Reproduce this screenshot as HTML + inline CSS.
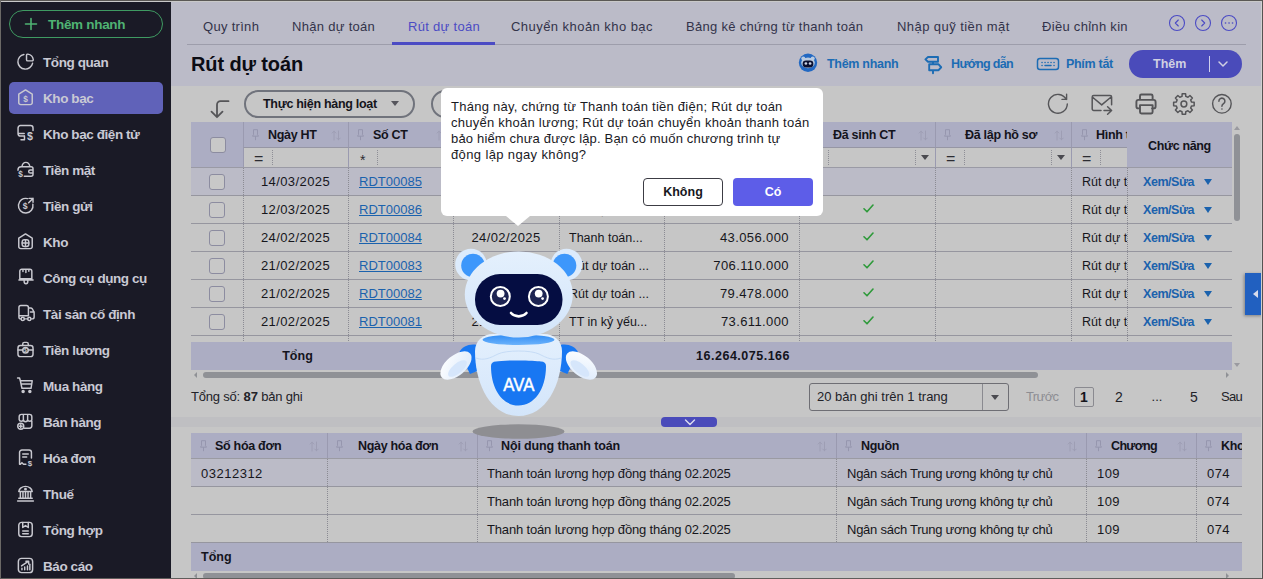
<!DOCTYPE html>
<html lang="vi">
<head>
<meta charset="utf-8">
<title>Rút dự toán</title>
<style>
*{box-sizing:border-box;margin:0;padding:0}
html,body{width:1263px;height:579px;overflow:hidden;background:#c6c6c6}
body{font-family:"Liberation Sans",sans-serif;font-size:13px;color:#111;position:relative}
.abs{position:absolute}
#app{position:absolute;left:0;top:0;width:1263px;height:579px;overflow:hidden;background:#c6c6c6}
/* ---------- sidebar ---------- */
#side{position:absolute;left:0;top:0;width:171px;height:579px;background:#1a1a26}
#quick{position:absolute;left:9px;top:10px;width:154px;height:28px;border:1px solid #3f9a62;border-radius:14px;color:#4fb273;font-weight:700;font-size:13.5px;line-height:28px}
#quick span{position:absolute;left:38px;top:0;letter-spacing:-.3px;white-space:nowrap}
#quick svg{position:absolute;left:14px;top:6px}
.mi{position:absolute;left:9px;width:154px;height:32px;border-radius:5px;color:#c9c9d4;font-weight:700;font-size:13.5px;line-height:34px;white-space:nowrap}
.mi.on{background:#6062b9}
.mi svg{position:absolute;left:7px;top:6px;width:19px;height:19px;fill:none;stroke:#c9c9d0;stroke-width:1.85;stroke-linecap:round;stroke-linejoin:round}
.mi span{position:absolute;left:34px;top:0;letter-spacing:-.42px}
/* ---------- header ---------- */
#head{position:absolute;left:171px;top:0;width:1092px;height:86px;background:#bbbbc8}
.tab{position:absolute;top:16px;height:21px;line-height:21px;font-size:13px;color:#33334a;white-space:nowrap;letter-spacing:.3px}
.tab.on{color:#4b4bc4}
#tabline{position:absolute;left:187px;top:44px;width:1059px;height:1px;background:#9d9dab}
#tabon{position:absolute;left:392px;top:42px;width:103px;height:3px;background:#4b4bc4}
#title{position:absolute;left:191px;top:50px;height:28px;line-height:28px;font-size:20px;font-weight:700;color:#0c0c14;letter-spacing:-.12px;white-space:nowrap}
.hl{position:absolute;top:54px;height:20px;line-height:20px;font-size:12.5px;font-weight:700;color:#1c6cb4;white-space:nowrap;letter-spacing:-.3px}
#add{position:absolute;left:1129px;top:50px;width:113px;height:28px;border-radius:14px;background:#4a4bba;color:#d0d0e2;font-weight:700;font-size:12.5px;line-height:28px}
#add span{position:absolute;left:24px;top:0}
#add i{position:absolute;left:80px;top:6px;width:1px;height:16px;background:#d0d0ee}

/* ---------- toolbar ---------- */
.pill{position:absolute;top:90px;height:28px;border:2px solid #70737c;border-radius:14px;font-weight:700;font-size:12.5px;line-height:24px;color:#15151c;white-space:nowrap;letter-spacing:-.3px}
.tic{position:absolute;fill:none;stroke:#4c4c50;stroke-width:1.4;stroke-linecap:round;stroke-linejoin:round}
/* ---------- grid ---------- */
.g{position:absolute;overflow:hidden}
.hc{position:absolute;top:0;height:25px;background:#acadc3;border-left:1px solid #9a9ab0;font-weight:700;font-size:12.5px;line-height:27px;color:#14141c;white-space:nowrap;letter-spacing:-.3px;overflow:hidden}
.hc b{position:absolute;top:0;font-weight:700}
.hc>*,.fc>*{margin-left:-1px}
.pin{position:absolute;top:7px;width:7px;height:12px;fill:none;stroke:#9696ae;stroke-width:1}
.srt{position:absolute;top:8px;width:10px;height:11px;fill:none;stroke:#9e9eb4;stroke-width:1;stroke-linecap:round;stroke-linejoin:round}
.fc{position:absolute;top:25px;height:21px;background:#c6c6c6;border-left:1px solid #9a9ab0;border-top:1px solid #9696a4;border-bottom:1px solid #9b9ba3;font-size:16px;line-height:22px;color:#2c2c32}
.fc u{position:absolute;top:2px;width:0;height:15px;border-left:1px dotted #8e8e96;text-decoration:none}
.fc s{position:absolute;top:7px;width:0;height:0;border:4px solid transparent;border-top:5px solid #4a4a50;border-bottom:0;text-decoration:none}
.fc em{position:absolute;top:0;font-style:normal}
.row{position:absolute;left:0;height:28px;border-bottom:1px solid #96969f;font-size:13px;line-height:28px;color:#16161c;white-space:nowrap}
.row.sel{background:#bbbbc7}
.row>span{position:absolute;top:0;height:27px}
.row a{color:#1b62ad;text-decoration:underline}
.vl{position:absolute;width:0;border-left:1px dotted #8b8b93}
.cb{position:absolute;width:16px;height:16px;border:1px solid #8c8ca0;border-radius:3px;background:#c8c8c8}
.num{letter-spacing:.4px}
.act{color:#1b62ad;font-weight:700;font-size:12.5px;letter-spacing:-.45px}
.car{position:absolute;width:0;height:0;border:4.5px solid transparent;border-top:6px solid #1b62ad;border-bottom:0}
.chk{position:absolute;width:11px;height:9px;fill:none;stroke:#2e9a3a;stroke-width:1.6;stroke-linecap:round;stroke-linejoin:round}
.ft{position:absolute;background:#acadc3;font-weight:700;font-size:12.5px;color:#14141c;white-space:nowrap}
.sb{position:absolute;height:6px;border-radius:3px;background:#8f9196}
.arr{position:absolute;width:0;height:0;border:4px solid transparent}

/* ---------- dialog ---------- */
#dlg{position:absolute;left:441px;top:88px;width:382px;height:128px;background:#fff;border-radius:6px}
#dlg p{position:absolute;left:10px;top:11px;width:366px;font-size:13px;line-height:16px;color:#1a1a1f;letter-spacing:.25px;white-space:nowrap}
#dlg .tip{position:absolute;left:65px;top:128px;width:0;height:0;border:12px solid transparent;border-top:10px solid #fff;border-bottom:0}
.btn{position:absolute;top:90px;width:80px;height:28px;border-radius:4px;font-weight:700;font-size:12.5px;line-height:26px;text-align:center}
#no{left:202px;border:1px solid #3c3c44;color:#17171d;background:#fff}
#yes{left:292px;background:#5d5de8;color:#fff;line-height:28px}
</style>
</head>
<body>
<div id="app">

<!-- SIDEBAR -->
<div id="side">
  <div id="quick"><svg width="14" height="14" viewBox="0 0 14 14"><path d="M7 1.5v11M1.5 7h11" stroke="#4fb273" stroke-width="1.6" fill="none" stroke-linecap="round"/></svg><span>Thêm nhanh</span></div>
  <div class="mi" style="top:46px"><svg viewBox="0 0 24 24"><path d="M10 3.100A9.350 9.350 0 1 0 20.900 14.300"/><path d="M13.300 4.200a1.500 1.500 0 0 1 1.700-1.500 8 8 0 0 1 6.800 6.800 1.500 1.500 0 0 1-1.500 1.700h-5.500a1.500 1.500 0 0 1-1.500-1.500z"/></svg><span>Tổng quan</span></div>
  <div class="mi on" style="top:82px"><svg viewBox="0 0 24 24"><path d="M12 2.500l8.500 5.300v10.700a2.500 2.500 0 0 1-2.500 2.500H6a2.500 2.500 0 0 1-2.500-2.500V7.800z"/><text x="12" y="17.300" text-anchor="middle" font-size="10.500" font-weight="700" font-family="Liberation Sans,sans-serif" fill="#c9c9d0" stroke="none">$</text></svg><span>Kho bạc</span></div>
  <div class="mi" style="top:118px"><svg viewBox="0 0 24 24"><path d="M21.500 8.200V5a3 3 0 0 0-3-3H5.600a3 3 0 0 0-3 3v7.200a3 3 0 0 0 3 3h5M2.600 11.900h7.800M10.700 15.200v4.800H6.300"/><text x="17.700" y="20.300" text-anchor="middle" font-size="13.500" font-weight="700" font-family="Liberation Sans,sans-serif" fill="#c9c9d0" stroke="none">$</text></svg><span>Kho bạc điện tử</span></div>
  <div class="mi" style="top:154px"><svg viewBox="0 0 24 24"><path d="M7.500 8.300C8 5 10 3 12.500 3s4.500 2 5 5.300M10.500 20.500h8.500a2.500 2.500 0 0 0 2.500-2.500v-7a2.500 2.500 0 0 0-2.500-2.500H6.500a4 4 0 0 0-4 4v.5M21.500 12.500h-3.500a2 2 0 0 0 0 4h3.500"/><text x="5.800" y="21.800" text-anchor="middle" font-size="10.500" font-weight="700" font-family="Liberation Sans,sans-serif" fill="#c9c9d0" stroke="none">$</text></svg><span>Tiền mặt</span></div>
  <div class="mi" style="top:190px"><svg viewBox="0 0 24 24"><path d="M14.500 3.300a9.200 9.200 0 1 0 6.800 7.200M16.500 3h5v5M21.500 3l-5.500 5.500"/><text x="11.500" y="17" text-anchor="middle" font-size="11" font-weight="700" font-family="Liberation Sans,sans-serif" fill="#c9c9d0" stroke="none">$</text></svg><span>Tiền gửi</span></div>
  <div class="mi" style="top:226px"><svg viewBox="0 0 24 24"><path d="M12 2.500l8.500 5.300v10.700a2.500 2.500 0 0 1-2.500 2.500H6a2.500 2.500 0 0 1-2.500-2.500V7.800z"/><rect x="7.800" y="9.800" width="8.400" height="8.400" rx="2.800"/><path d="M12 9.800v8.400M7.800 14h8.400"/></svg><span>Kho</span></div>
  <div class="mi" style="top:262px"><svg viewBox="0 0 24 24"><path d="M4.800 13.500V4a2.500 2.500 0 0 1 2.500-2.500h10.200a2.500 2.500 0 0 1 2.500 2.500v9.500zM3.700 15.200h17.900M10.300 15.200v2.300a2.300 2.300 0 0 0 4.600 0v-2.300M8.800 1.500v3M12.500 1.500v4.200M16.200 1.500v2.500"/></svg><span>Công cụ dụng cụ</span></div>
  <div class="mi" style="top:298px"><svg viewBox="0 0 24 24"><path d="M15.700 14.900H3.700V4.300a2.500 2.500 0 0 1 2.500-2.500h7a2.500 2.500 0 0 1 2.500 2.500zM15.700 5.100h2.800a2.500 2.500 0 0 1 2.100 1.200l1.900 3.200a2.500 2.500 0 0 1 .4 1.300v5.500a2.500 2.500 0 0 1-2.500 2.500h-.9M3.700 14.900v1.400a2.500 2.500 0 0 0 2.500 2.500h.300M10.500 18.800h4.300M18.300 10h4"/><circle cx="8.500" cy="18.800" r="2"/><circle cx="16.800" cy="18.800" r="2"/></svg><span>Tài sản cố định</span></div>
  <div class="mi" style="top:334px"><svg viewBox="0 0 24 24"><rect x="2.500" y="7" width="19" height="14" rx="3"/><path d="M8.500 7V5a2 2 0 0 1 2-2h3a2 2 0 0 1 2 2v2M2.500 12.500h6M15.500 12.500h6"/><circle cx="12" cy="13" r="3.500"/><text x="12" y="15.300" text-anchor="middle" font-size="6.500" font-weight="700" font-family="Liberation Sans,sans-serif" fill="#c9c9d0" stroke="none">$</text></svg><span>Tiền lương</span></div>
  <div class="mi" style="top:370px"><svg viewBox="0 0 24 24"><path d="M2 2.500h2.500l1 3.500M5.500 6h15l-1.500 9.500h-11.500zM6.500 10h13"/><circle cx="9" cy="19.500" r="1.300" fill="#c9c9d0"/><circle cx="17.500" cy="19.500" r="1.300" fill="#c9c9d0"/></svg><span>Mua hàng</span></div>
  <div class="mi" style="top:406px"><svg viewBox="0 0 24 24"><path d="M4 9.500V6a3 3 0 0 1 3-3h10a3 3 0 0 1 3 3v3.500a2.700 2.700 0 0 1-5.300 0 2.700 2.700 0 0 1-5.400 0 2.700 2.700 0 0 1-5.300 0zM9.300 3v6.500M14.700 3v6.500M20 11.500v6a3 3 0 0 1-3 3h-6.500"/><circle cx="6" cy="18" r="3.800"/><path d="M6 16.200v3.600M4.200 18h3.600"/></svg><span>Bán hàng</span></div>
  <div class="mi" style="top:442px"><svg viewBox="0 0 24 24"><path d="M12.500 20.500H9.500l-2-2-2 2H4.500V5.500a3 3 0 0 1 3-3h9a3 3 0 0 1 3 3v7M8.500 7.500h7M8.500 11.500h5"/><text x="17.500" y="22.300" text-anchor="middle" font-size="10" font-weight="700" font-family="Liberation Sans,sans-serif" fill="#c9c9d0" stroke="none">$</text></svg><span>Hóa đơn</span></div>
  <div class="mi" style="top:478px"><svg viewBox="0 0 24 24"><path d="M3.500 9.500C4 6 7.500 3 12 3s8 3 8.500 6.500zM5.500 10v7.500M8.800 10v7.500M12 10v7.500M15.200 10v7.500M18.500 10v7.500M3.500 18h17M2 21.500h20"/><circle cx="12" cy="6.500" r=".9"/></svg><span>Thuế</span></div>
  <div class="mi" style="top:514px"><svg viewBox="0 0 24 24"><rect x="3.500" y="3" width="17" height="18" rx="3.500"/><path d="M8.500 3v6.500l3.500-2.500 3.500 2.500V3M8.500 14h7M8.500 17.500h7"/></svg><span>Tổng hợp</span></div>
  <div class="mi" style="top:550px"><svg viewBox="0 0 24 24"><rect x="3" y="3" width="18" height="18" rx="4"/><path d="M7.500 17.500v-2M11 17.500V14M14.500 17.500v-5M7 12.500l8-5.500M12.500 6.500h3.500v3.500"/><path d="M17.500 17.500v-7"/></svg><span>Báo cáo</span></div>
</div>

<!-- HEADER -->
<div id="head">
  <span class="tab" style="left:32px">Quy trình</span>
  <span class="tab" style="left:121px">Nhận dự toán</span>
  <span class="tab on" style="left:237px">Rút dự toán</span>
  <span class="tab" style="left:340px;letter-spacing:.45px">Chuyển khoản kho bạc</span>
  <span class="tab" style="left:515px">Bảng kê chứng từ thanh toán</span>
  <span class="tab" style="left:726px;letter-spacing:.43px">Nhập quỹ tiền mặt</span>
  <span class="tab" style="left:871px;width:86px;overflow:hidden">Điều chỉnh kinh phí</span>
  <svg class="abs" style="left:997px;top:14px" width="70" height="18" viewBox="0 0 70 18" fill="none" stroke="#4b4bc4" stroke-width="1.1" stroke-linecap="round" stroke-linejoin="round"><circle cx="9" cy="9" r="7.500"/><path d="M10.300 6l-3 3 3 3"/><circle cx="35" cy="9" r="7.500"/><path d="M33.700 6l3 3-3 3"/><circle cx="61" cy="9" r="7.500"/><path d="M57.500 9h.1M61 9h.1M64.500 9h.1" stroke-width="1.600"/></svg>
  <div id="tabline" style="left:16px"></div>
  <div id="tabon" style="left:221px"></div>
  <div id="title" style="left:20px">Rút dự toán</div>
  <svg class="abs" style="left:626px;top:51px" width="24" height="24" viewBox="797 51 24 24"><circle cx="808" cy="62.800" r="9.200" fill="#2268c2"/><circle cx="803.300" cy="58.600" r="2" fill="#b9cadf"/><circle cx="812.700" cy="58.600" r="2" fill="#b9cadf"/><ellipse cx="808" cy="62.800" rx="6.800" ry="5.400" fill="#b9cadf"/><rect x="802.600" y="60.600" width="10.800" height="6.800" rx="3.400" fill="#0a1030"/><circle cx="805.900" cy="63.500" r="1.350" fill="#c9d3e6"/><circle cx="810.100" cy="63.500" r="1.350" fill="#c9d3e6"/></svg>
  <span class="hl" style="left:656px">Thêm nhanh</span>
  <svg class="abs" style="left:749px;top:51px" width="26" height="26" viewBox="920 51 26 26" fill="none" stroke="#1c6cb4" stroke-width="1.900" stroke-linecap="round" stroke-linejoin="round"><path d="M933 61.700v2.600M933 70.200v3M928 57h10v4.700h-10l-2.600-2.350zM929.200 64.300h9.400l2.600 2.950-2.600 2.950h-9.400z"/></svg>
  <span class="hl" style="left:780px;letter-spacing:-.65px">Hướng dẫn</span>
  <svg class="abs" style="left:865px;top:55px" width="24" height="18" viewBox="0 0 24 18" fill="none" stroke="#1c6cb4" stroke-width="1.500" stroke-linecap="round" stroke-linejoin="round"><rect x="1.500" y="3.500" width="21" height="11" rx="2.500"/><path d="M6 7.500h.1M9 7.500h.1M12 7.500h.1M15 7.500h.1M18 7.500h.1M6 10.500h.1M18 10.500h.1M9 10.500h6"/></svg>
  <span class="hl" style="left:895px">Phím tắt</span>
  <div id="add" style="left:958px"><span>Thêm</span><i></i><svg class="abs" style="left:88px;top:9px" width="12" height="10" viewBox="0 0 12 10" fill="none" stroke="#d0d0e2" stroke-width="1.500" stroke-linecap="round" stroke-linejoin="round"><path d="M2 3l4 4 4-4"/></svg></div>
</div>

<!-- TOOLBAR -->
<svg class="tic" style="left:205px;top:95px;stroke-width:1.8;stroke:#555558" width="28" height="26" viewBox="205 95 28 26"><path d="M228.500 101.200h-8a3.500 3.500 0 0 0-3.500 3.500v12.300M211.500 111.700l5.500 5.500 5.500-5.500"/></svg>
<div class="pill" style="left:244px;width:171px"><span class="abs" style="left:17px;top:0">Thực hiện hàng loạt</span><i class="arr" style="left:145px;top:9px;border-width:5px 4.500px 0;border-top-color:#55555c"></i></div>
<div class="pill" style="left:431px;width:120px"></div>
<svg class="tic" style="left:1040px;top:88px;stroke:#555558" width="210" height="34" viewBox="1040 88 210 34">
<path d="M1067.300 104a9.400 9.400 0 1 1-1.100-4.600M1066.600 94.300v5.100h-4.600" stroke-width="1.400"/>
<path d="M1101 110.500h-7.300a1.500 1.500 0 0 1-1.500-1.500V97a1.500 1.500 0 0 1 1.500-1.500h16.400a1.500 1.500 0 0 1 1.500 1.500v7.800M1092.600 97.200l9.100 7.700 9.100-7.700M1104 110.500h7.600M1107.600 106.700l4 3.800-4 3.800" stroke-width="1.500"/>
<path d="M1140 99.900v-4a1.400 1.400 0 0 1 1.400-1.400h9.800a1.400 1.400 0 0 1 1.400 1.400v4M1140 108.400h-1.600a2 2 0 0 1-2-2v-4.500a2 2 0 0 1 2-2h15.200a2 2 0 0 1 2 2v4.500a2 2 0 0 1-2 2h-1.600M1140 105.100h12.600v7a1.400 1.400 0 0 1-1.400 1.400h-9.800a1.400 1.400 0 0 1-1.400-1.400z" stroke-width="1.900"/>
<path d="M1182.00 96.33L1182.19 93.74L1185.61 93.74L1185.80 96.33L1187.97 97.23L1189.95 95.54L1192.36 97.95L1190.67 99.93L1191.57 102.10L1194.16 102.29L1194.16 105.71L1191.57 105.90L1190.67 108.07L1192.36 110.05L1189.95 112.46L1187.97 110.77L1185.80 111.67L1185.61 114.26L1182.19 114.26L1182.00 111.67L1179.83 110.77L1177.85 112.46L1175.44 110.05L1177.13 108.07L1176.23 105.90L1173.64 105.71L1173.64 102.29L1176.23 102.10L1177.13 99.93L1175.44 97.95L1177.85 95.54L1179.83 97.23z" stroke-width="1.500"/><circle cx="1183.900" cy="104" r="2.900" stroke-width="1.500"/>
<circle cx="1221.900" cy="103.800" r="9.300" stroke-width="1.400"/><path d="M1218.900 101.200a3 3 0 1 1 4.600 2.500c-1 .7-1.600 1.300-1.600 2.600M1221.900 109h.1" stroke-width="1.500"/>
</svg>

<!-- GRID 1 -->
<div class="g" id="g1" style="left:191px;top:122px;width:1041px;height:220px">
  <div class="hc" style="left:0;width:52px;height:45px;border-left:0"></div>
  <i class="cb" style="left:19px;top:15px"></i>
  <div class="hc" style="left:52px;width:105px"><svg class="pin" style="left:9px" viewBox="0 0 7 12"><path d="M1.500.7h4v5l1 1.500h-6l1-1.500zM3.500 7.200v4"/></svg><b style="left:25px">Ngày HT</b><svg class="srt" style="left:88px" viewBox="0 0 10 11"><path d="M3 10V1.200M1.200 3l1.800-1.800L4.800 3M7.500 1v8.800M5.700 8l1.800 1.800L9.300 8"/></svg></div>
  <div class="hc" style="left:157px;width:105px"><svg class="pin" style="left:9px" viewBox="0 0 7 12"><path d="M1.500.7h4v5l1 1.500h-6l1-1.500zM3.500 7.200v4"/></svg><b style="left:25px">Số CT</b><svg class="srt" style="left:88px" viewBox="0 0 10 11"><path d="M3 10V1.200M1.200 3l1.800-1.800L4.800 3M7.500 1v8.800M5.700 8l1.800 1.800L9.300 8"/></svg></div>
  <div class="hc" style="left:262px;width:106px"><svg class="pin" style="left:9px" viewBox="0 0 7 12"><path d="M1.500.7h4v5l1 1.500h-6l1-1.500zM3.500 7.200v4"/></svg><b style="left:25px">Ngày CT</b><svg class="srt" style="left:89px" viewBox="0 0 10 11"><path d="M3 10V1.200M1.200 3l1.800-1.800L4.800 3M7.500 1v8.800M5.700 8l1.800 1.800L9.300 8"/></svg></div>
  <div class="hc" style="left:368px;width:105px"><svg class="pin" style="left:9px" viewBox="0 0 7 12"><path d="M1.500.7h4v5l1 1.500h-6l1-1.500zM3.500 7.200v4"/></svg><b style="left:25px">Diễn giải</b><svg class="srt" style="left:88px" viewBox="0 0 10 11"><path d="M3 10V1.200M1.200 3l1.800-1.800L4.800 3M7.500 1v8.800M5.700 8l1.800 1.800L9.300 8"/></svg></div>
  <div class="hc" style="left:473px;width:135px"><svg class="pin" style="left:9px" viewBox="0 0 7 12"><path d="M1.500.7h4v5l1 1.500h-6l1-1.500zM3.500 7.200v4"/></svg><b style="left:50px">Số tiền</b><svg class="srt" style="left:118px" viewBox="0 0 10 11"><path d="M3 10V1.200M1.200 3l1.800-1.800L4.800 3M7.500 1v8.800M5.700 8l1.800 1.800L9.300 8"/></svg></div>
  <div class="hc" style="left:608px;width:136px"><svg class="pin" style="left:9px" viewBox="0 0 7 12"><path d="M1.500.7h4v5l1 1.500h-6l1-1.500zM3.500 7.200v4"/></svg><b style="left:34px">Đã sinh CT</b><svg class="srt" style="left:119px" viewBox="0 0 10 11"><path d="M3 10V1.200M1.200 3l1.800-1.800L4.800 3M7.500 1v8.800M5.700 8l1.800 1.800L9.300 8"/></svg></div>
  <div class="hc" style="left:744px;width:136px"><svg class="pin" style="left:9px" viewBox="0 0 7 12"><path d="M1.500.7h4v5l1 1.500h-6l1-1.500zM3.500 7.200v4"/></svg><b style="left:30px">Đã lập hồ sơ</b><svg class="srt" style="left:119px" viewBox="0 0 10 11"><path d="M3 10V1.200M1.200 3l1.800-1.800L4.800 3M7.500 1v8.800M5.700 8l1.800 1.800L9.300 8"/></svg></div>
  <div class="hc" style="left:880px;width:136px"><svg class="pin" style="left:10px" viewBox="0 0 7 12"><path d="M1.500.7h4v5l1 1.500h-6l1-1.500zM3.500 7.200v4"/></svg><b style="left:25px">Hình thức</b></div>
  <div class="fc" style="left:52px;width:105px"><em style="left:11px">=</em><u style="left:29px"></u></div>
  <div class="fc" style="left:157px;width:105px"><em style="left:12px;top:1px;font-size:14px">*</em><u style="left:29px"></u></div>
  <div class="fc" style="left:262px;width:106px"><em style="left:11px">=</em><u style="left:29px"></u></div>
  <div class="fc" style="left:368px;width:105px"><em style="left:12px;top:1px;font-size:14px">*</em><u style="left:29px"></u></div>
  <div class="fc" style="left:473px;width:135px"><em style="left:11px">=</em><u style="left:29px"></u></div>
  <div class="fc" style="left:608px;width:136px"><em style="left:11px">=</em><u style="left:29px"></u><u style="left:116px"></u><s style="left:122px"></s></div>
  <div class="fc" style="left:744px;width:136px"><em style="left:11px">=</em><u style="left:29px"></u><u style="left:116px"></u><s style="left:122px"></s></div>
  <div class="fc" style="left:880px;width:136px"><em style="left:11px">=</em><u style="left:29px"></u></div>
  <div class="row sel" style="top:46px;width:1041px">
    <i class="cb" style="left:18px;top:6px"></i>
    <span class="num" style="left:52px;width:105px;text-align:center">14/03/2025</span>
    <span style="left:168px"><a>RDT00085</a></span>
    <span class="num" style="left:262px;width:106px;text-align:center">14/03/2025</span>
    <span style="left:378px;font-size:12.5px">Thanh toán...</span>
    <span class="num" style="left:473px;width:125px;text-align:right">54.220.000</span>
    
    <span style="left:891px;font-size:12.500px">Rút dự toán</span>
    <span style="left:936px;width:105px;background:#bbbbc7"><span class="act abs" style="left:16px;top:0">Xem/Sửa</span><i class="car" style="left:77px;top:11px"></i></span>
  </div>
  <div class="row" style="top:74px;width:1041px">
    <i class="cb" style="left:18px;top:6px"></i>
    <span class="num" style="left:52px;width:105px;text-align:center">12/03/2025</span>
    <span style="left:168px"><a>RDT00086</a></span>
    <span class="num" style="left:262px;width:106px;text-align:center">12/03/2025</span>
    <span style="left:378px;font-size:12.5px">Rút dự toán ...</span>
    <span class="num" style="left:473px;width:125px;text-align:right">125.640.000</span>
    <svg class="chk" style="left:672px;top:7.500px" viewBox="0 0 11 9"><path d="M1 4.800l3 3 6-6.800"/></svg>
    <span style="left:891px;font-size:12.500px">Rút dự toán</span>
    <span style="left:936px;width:105px;background:#c6c6c6"><span class="act abs" style="left:16px;top:0">Xem/Sửa</span><i class="car" style="left:77px;top:11px"></i></span>
  </div>
  <div class="row" style="top:102px;width:1041px">
    <i class="cb" style="left:18px;top:6px"></i>
    <span class="num" style="left:52px;width:105px;text-align:center">24/02/2025</span>
    <span style="left:168px"><a>RDT00084</a></span>
    <span class="num" style="left:262px;width:106px;text-align:center">24/02/2025</span>
    <span style="left:378px;font-size:12.5px">Thanh toán...</span>
    <span class="num" style="left:473px;width:125px;text-align:right">43.056.000</span>
    <svg class="chk" style="left:672px;top:7.500px" viewBox="0 0 11 9"><path d="M1 4.800l3 3 6-6.800"/></svg>
    <span style="left:891px;font-size:12.500px">Rút dự toán</span>
    <span style="left:936px;width:105px;background:#c6c6c6"><span class="act abs" style="left:16px;top:0">Xem/Sửa</span><i class="car" style="left:77px;top:11px"></i></span>
  </div>
  <div class="row" style="top:130px;width:1041px">
    <i class="cb" style="left:18px;top:6px"></i>
    <span class="num" style="left:52px;width:105px;text-align:center">21/02/2025</span>
    <span style="left:168px"><a>RDT00083</a></span>
    <span class="num" style="left:262px;width:106px;text-align:center">21/02/2025</span>
    <span style="left:378px;font-size:12.5px">Rút dự toán ...</span>
    <span class="num" style="left:473px;width:125px;text-align:right">706.110.000</span>
    <svg class="chk" style="left:672px;top:7.500px" viewBox="0 0 11 9"><path d="M1 4.800l3 3 6-6.800"/></svg>
    <span style="left:891px;font-size:12.500px">Rút dự toán</span>
    <span style="left:936px;width:105px;background:#c6c6c6"><span class="act abs" style="left:16px;top:0">Xem/Sửa</span><i class="car" style="left:77px;top:11px"></i></span>
  </div>
  <div class="row" style="top:158px;width:1041px">
    <i class="cb" style="left:18px;top:6px"></i>
    <span class="num" style="left:52px;width:105px;text-align:center">21/02/2025</span>
    <span style="left:168px"><a>RDT00082</a></span>
    <span class="num" style="left:262px;width:106px;text-align:center">21/02/2025</span>
    <span style="left:378px;font-size:12.5px">Rút dự toán ...</span>
    <span class="num" style="left:473px;width:125px;text-align:right">79.478.000</span>
    <svg class="chk" style="left:672px;top:7.500px" viewBox="0 0 11 9"><path d="M1 4.800l3 3 6-6.800"/></svg>
    <span style="left:891px;font-size:12.500px">Rút dự toán</span>
    <span style="left:936px;width:105px;background:#c6c6c6"><span class="act abs" style="left:16px;top:0">Xem/Sửa</span><i class="car" style="left:77px;top:11px"></i></span>
  </div>
  <div class="row" style="top:186px;width:1041px">
    <i class="cb" style="left:18px;top:6px"></i>
    <span class="num" style="left:52px;width:105px;text-align:center">21/02/2025</span>
    <span style="left:168px"><a>RDT00081</a></span>
    <span class="num" style="left:262px;width:106px;text-align:center">21/02/2025</span>
    <span style="left:378px;font-size:12.5px">TT in kỷ yếu...</span>
    <span class="num" style="left:473px;width:125px;text-align:right">73.611.000</span>
    <svg class="chk" style="left:672px;top:7.500px" viewBox="0 0 11 9"><path d="M1 4.800l3 3 6-6.800"/></svg>
    <span style="left:891px;font-size:12.500px">Rút dự toán</span>
    <span style="left:936px;width:105px;background:#c6c6c6"><span class="act abs" style="left:16px;top:0">Xem/Sửa</span><i class="car" style="left:77px;top:11px"></i></span>
  </div>
  <div class="row" style="top:214px;width:1041px">
    <i class="cb" style="left:18px;top:6px"></i>
    <span class="num" style="left:52px;width:105px;text-align:center">20/02/2025</span>
    <span style="left:168px"><a>RDT00080</a></span>
    <span class="num" style="left:262px;width:106px;text-align:center">20/02/2025</span>
    <span style="left:378px;font-size:12.5px">Rút dự toán ...</span>
    <span class="num" style="left:473px;width:125px;text-align:right">12.500.000</span>
    <svg class="chk" style="left:672px;top:7.500px" viewBox="0 0 11 9"><path d="M1 4.800l3 3 6-6.800"/></svg>
    <span style="left:891px;font-size:12.500px">Rút dự toán</span>
    <span style="left:936px;width:105px;background:#c6c6c6"><span class="act abs" style="left:16px;top:0">Xem/Sửa</span><i class="car" style="left:77px;top:11px"></i></span>
  </div>
  <i class="vl" style="left:52px;top:45px;height:180px"></i>
  <i class="vl" style="left:157px;top:45px;height:180px"></i>
  <i class="vl" style="left:262px;top:45px;height:180px"></i>
  <i class="vl" style="left:368px;top:45px;height:180px"></i>
  <i class="vl" style="left:473px;top:45px;height:180px"></i>
  <i class="vl" style="left:608px;top:45px;height:180px"></i>
  <i class="vl" style="left:744px;top:45px;height:180px"></i>
  <i class="vl" style="left:880px;top:45px;height:180px"></i>
  <i class="vl" style="left:936px;top:45px;height:180px"></i>
  <div class="hc" style="left:936px;width:105px;height:45px;line-height:49px;text-align:center;border-left:0;letter-spacing:-.35px">Chức năng</div>
  <i class="abs" style="left:0;top:45px;width:1041px;height:1px;background:#9a9aa5"></i>
</div>

<!-- grid1 footer / scroll / paging -->
<div class="ft" style="left:191px;top:342px;width:1041px;height:28px;line-height:28px"><span class="abs" style="left:54px;width:105px;text-align:center">Tổng</span><span class="abs" style="left:473px;width:126px;text-align:right;letter-spacing:.5px">16.264.075.166</span></div>
<i class="abs" style="left:1234px;top:134px;width:6px;height:87px;border-radius:3px;background:#8f9196"></i>
<i class="arr" style="left:1234px;top:126px;border-width:0 3px 4px 3px;border-bottom-color:#9a9aa0"></i>
<i class="arr" style="left:1234px;top:362.500px;border-width:4px 3px 0 3px;border-top-color:#9a9aa0"></i>
<i class="arr" style="left:193.500px;top:372px;border-width:3px 3.500px 3px 0;border-right-color:#8f9196"></i>
<i class="arr" style="left:1225.500px;top:372px;border-width:3px 0 3px 3.500px;border-left-color:#8f9196"></i>
<i class="sb" style="left:203px;top:372px;width:835px"></i>
<div class="abs" style="left:191px;top:387px;height:20px;line-height:20px;font-size:13px;color:#222228;white-space:nowrap;letter-spacing:-.2px">Tổng số: <b style="letter-spacing:0">87</b> bản ghi</div>
<div class="abs" style="left:809px;top:383px;width:200px;height:28px;border:1px solid #6e6e74;border-radius:3px;font-size:13px;line-height:26px;color:#222228;white-space:nowrap"><span class="abs" style="left:7px;top:0">20 bản ghi trên 1 trang</span><i class="abs" style="left:172px;top:0;width:1px;height:26px;background:#8a8a90"></i><i class="arr" style="left:181px;top:11px;border-width:5px 4.500px 0;border-top-color:#4a4a50"></i></div>
<div class="abs" style="left:1026px;top:387px;height:20px;line-height:20px;font-size:13px;color:#8d8d93;letter-spacing:-.6px">Trước</div>
<div class="abs" style="left:1074px;top:387px;width:20px;height:20px;border:1px solid #8a8a90;border-radius:2px;line-height:19px;text-align:center;font-weight:700;font-size:14px;color:#15151c">1</div>
<div class="abs" style="left:1112px;top:387px;width:14px;height:20px;line-height:20px;text-align:center;font-size:14px;color:#222228">2</div>
<div class="abs" style="left:1149px;top:387px;width:16px;height:20px;line-height:20px;text-align:center;font-size:13px;color:#222228">...</div>
<div class="abs" style="left:1187px;top:387px;width:14px;height:20px;line-height:20px;text-align:center;font-size:14px;color:#222228">5</div>
<div class="abs" style="left:1221px;top:387px;width:24px;height:20px;line-height:20px;font-size:13px;color:#222228;letter-spacing:-.7px">Sau</div>

<!-- splitter -->
<div class="abs" style="left:171px;top:417px;width:1092px;height:10px;background:#bfbfc2"></div>
<div class="abs" style="left:661px;top:417px;width:56px;height:10px;border-radius:4px;background:#4a4bba"><svg class="abs" style="left:23px;top:2px" width="12" height="7" viewBox="0 0 12 7" fill="none" stroke="#dcdcf0" stroke-width="1.400" stroke-linecap="round" stroke-linejoin="round"><path d="M1.500 1l4.500 4.500 4.500-4.500"/></svg></div>

<!-- GRID 2 -->
<div class="g" id="g2" style="left:191px;top:433px;width:1051px;height:110px;border-top:0">
  <div class="hc" style="left:0px;width:136px;height:25px;line-height:26px;border-left:0"><svg class="pin" style="left:10px;top:7px" viewBox="0 0 7 12"><path d="M1.500.7h4v5l1 1.500h-6l1-1.500zM3.500 7.200v4"/></svg><b style="left:25px">Số hóa đơn</b><svg class="srt" style="left:119px;top:8px" viewBox="0 0 10 11"><path d="M3 10V1.200M1.200 3l1.800-1.800L4.800 3M7.500 1v8.800M5.700 8l1.800 1.800L9.300 8"/></svg></div>
  <div class="hc" style="left:136px;width:150px;height:25px;line-height:26px"><svg class="pin" style="left:9px;top:7px" viewBox="0 0 7 12"><path d="M1.500.7h4v5l1 1.500h-6l1-1.500zM3.500 7.200v4"/></svg><b style="left:31px">Ngày hóa đơn</b><svg class="srt" style="left:131px;top:8px" viewBox="0 0 10 11"><path d="M3 10V1.200M1.200 3l1.800-1.800L4.800 3M7.500 1v8.800M5.700 8l1.800 1.800L9.300 8"/></svg></div>
  <div class="hc" style="left:286px;width:359px;height:25px;line-height:26px"><svg class="pin" style="left:9px;top:7px" viewBox="0 0 7 12"><path d="M1.500.7h4v5l1 1.500h-6l1-1.500zM3.500 7.200v4"/></svg><b style="left:24px;letter-spacing:-.13px">Nội dung thanh toán</b><svg class="srt" style="left:340px;top:8px" viewBox="0 0 10 11"><path d="M3 10V1.200M1.200 3l1.800-1.800L4.800 3M7.500 1v8.800M5.700 8l1.800 1.800L9.300 8"/></svg></div>
  <div class="hc" style="left:645px;width:250px;height:25px;line-height:26px"><svg class="pin" style="left:9px;top:7px" viewBox="0 0 7 12"><path d="M1.500.7h4v5l1 1.500h-6l1-1.500zM3.500 7.200v4"/></svg><b style="left:25px">Nguồn</b><svg class="srt" style="left:231px;top:8px" viewBox="0 0 10 11"><path d="M3 10V1.200M1.200 3l1.800-1.800L4.800 3M7.500 1v8.800M5.700 8l1.800 1.800L9.300 8"/></svg></div>
  <div class="hc" style="left:895px;width:110px;height:25px;line-height:26px"><svg class="pin" style="left:9px;top:7px" viewBox="0 0 7 12"><path d="M1.500.7h4v5l1 1.500h-6l1-1.500zM3.500 7.200v4"/></svg><b style="left:25px;letter-spacing:-.65px">Chương</b><svg class="srt" style="left:91px;top:8px" viewBox="0 0 10 11"><path d="M3 10V1.200M1.200 3l1.800-1.800L4.800 3M7.500 1v8.800M5.700 8l1.800 1.800L9.300 8"/></svg></div>
  <div class="hc" style="left:1005px;width:110px;height:25px;line-height:26px"><svg class="pin" style="left:9px;top:7px" viewBox="0 0 7 12"><path d="M1.500.7h4v5l1 1.500h-6l1-1.500zM3.500 7.200v4"/></svg><b style="left:25px">Khoản</b><svg class="srt" style="left:91px;top:8px" viewBox="0 0 10 11"><path d="M3 10V1.200M1.200 3l1.800-1.800L4.800 3M7.500 1v8.800M5.700 8l1.800 1.800L9.300 8"/></svg></div>
  <div class="row sel" style="top:26px;width:1051px;line-height:29px">
    <span style="left:10px;letter-spacing:.5px">03212312</span>
    <span style="left:296px;letter-spacing:-.16px">Thanh toán lương hợp đồng tháng 02.2025</span>
    <span style="left:656px;letter-spacing:-.25px">Ngân sách Trung ương không tự chủ</span>
    <span style="left:906px;letter-spacing:.4px">109</span>
    <span style="left:1016px;letter-spacing:.4px">074</span>
  </div>
  <div class="row" style="top:54px;width:1051px;line-height:29px">
    <span style="left:10px;letter-spacing:.5px"></span>
    <span style="left:296px;letter-spacing:-.16px">Thanh toán lương hợp đồng tháng 02.2025</span>
    <span style="left:656px;letter-spacing:-.25px">Ngân sách Trung ương không tự chủ</span>
    <span style="left:906px;letter-spacing:.4px">109</span>
    <span style="left:1016px;letter-spacing:.4px">074</span>
  </div>
  <div class="row" style="top:82px;width:1051px;line-height:29px">
    <span style="left:10px;letter-spacing:.5px"></span>
    <span style="left:296px;letter-spacing:-.16px">Thanh toán lương hợp đồng tháng 02.2025</span>
    <span style="left:656px;letter-spacing:-.25px">Ngân sách Trung ương không tự chủ</span>
    <span style="left:906px;letter-spacing:.4px">109</span>
    <span style="left:1016px;letter-spacing:.4px">074</span>
  </div>
  <i class="vl" style="left:136px;top:25px;height:84px"></i>
  <i class="vl" style="left:286px;top:25px;height:84px"></i>
  <i class="vl" style="left:645px;top:25px;height:84px"></i>
  <i class="vl" style="left:895px;top:25px;height:84px"></i>
  <i class="vl" style="left:1005px;top:25px;height:84px"></i>
</div>
<i class="abs" style="left:191px;top:458px;width:1051px;height:1px;background:#9b9ba3"></i>
<div class="ft" style="left:191px;top:543px;width:1051px;height:28px;line-height:29px"><span class="abs" style="left:10px">Tổng</span></div>
<i class="arr" style="left:193.500px;top:572.500px;border-width:3px 3.500px 3px 0;border-right-color:#8f9196"></i>
<i class="arr" style="left:1225.500px;top:572.500px;border-width:3px 0 3px 3.500px;border-left-color:#8f9196"></i>
<i class="sb" style="left:203px;top:573px;width:532px"></i>

<!-- right handle -->
<div class="abs" style="left:1245px;top:273px;width:18px;height:42px;background:#2160c0;box-shadow:-1px 1px 3px rgba(0,0,0,.35)"><i class="arr" style="left:8px;top:16.500px;border-width:4.500px 5px 4.500px 0;border-right-color:#d8dcec"></i></div>

<!-- DIALOG -->
<div id="dlg">
  <p>Tháng này, chứng từ Thanh toán tiền điện; Rút dự toán<br>chuyển khoản lương; Rút dự toán chuyển khoản thanh toán<br><span style="letter-spacing:.17px">bảo hiểm chưa được lập. Bạn có muốn chương trình tự</span><br><span style="letter-spacing:.37px">động lập ngay không?</span></p>
  <div class="btn" id="no">Không</div>
  <div class="btn" id="yes">Có</div>
  <i class="tip"></i>
</div>

<!-- ROBOT -->
<svg id="bot" class="abs" style="left:430px;top:240px" width="180" height="210" viewBox="430 240 180 210">
  <defs>
    <linearGradient id="gb" x1="0" y1="0" x2="0" y2="1"><stop offset="0" stop-color="#e4f0fd"/><stop offset="1" stop-color="#d3e5fa"/></linearGradient>
    <linearGradient id="gn" x1="0" y1="0" x2="0" y2="1"><stop offset="0" stop-color="#2f8cf5"/><stop offset="1" stop-color="#6db3fb"/></linearGradient>
    <linearGradient id="ga" x1="0" y1="0" x2="1" y2="1"><stop offset="0" stop-color="#ffffff"/><stop offset="1" stop-color="#dbe9fb"/></linearGradient>
  </defs>
  <ellipse cx="518.500" cy="431.500" rx="46" ry="7.200" fill="#8e8e92"/>
  <!-- arms -->
  <path d="M477 345c-8-1.500-14.500 1.500-17.500 7l10.500 22 7.500-3z" fill="#1877f2"/>
  <ellipse cx="456" cy="365.500" rx="18.500" ry="10" transform="rotate(-40 456 365.500)" fill="url(#ga)"/>
  <ellipse cx="457.500" cy="368.500" rx="11.500" ry="5" transform="rotate(-40 457.500 368.500)" fill="#d6e6fb"/>
  <path d="M560.400 345c8-1.500 14.500 1.500 17.500 7l-10.500 22-7.500-3z" fill="#1877f2"/>
  <ellipse cx="581.400" cy="365.500" rx="18.500" ry="10" transform="rotate(40 581.400 365.500)" fill="url(#ga)"/>
  <ellipse cx="579.900" cy="368.500" rx="11.500" ry="5" transform="rotate(40 579.900 368.500)" fill="#d6e6fb"/>
  <!-- body -->
  <path d="M475 351c0-10 8-17 18-17h51c10 0 18 7 18 17 0 34-16 65-43.500 65S475 385 475 351z" fill="url(#gb)"/>
  <ellipse cx="518.500" cy="339.800" rx="36" ry="5.200" fill="url(#gn)"/>
  <path d="M476 358c8 3 14 0 22-4 8-4 33-4 41 0 8 4 14 7 22 4" fill="none" stroke="#c6dcf6" stroke-width="1"/>
  <path d="M491 366c0-3 2-4.500 5-4.500 7-1.500 38-1.500 45 0 3 0 5 1.500 5 4.500 0 24-12 39.500-27.500 39.500S491 390 491 366z" fill="#1877f2"/>
  <text x="518.800" y="390.500" text-anchor="middle" font-family="Liberation Sans,sans-serif" font-size="19" font-weight="400" fill="#fff" stroke="#fff" stroke-width=".5" textLength="31" lengthAdjust="spacingAndGlyphs">AVA</text>
  <!-- ears -->
  <circle cx="471" cy="264.500" r="15.800" fill="#dcebfc"/>
  <circle cx="566.500" cy="264.500" r="15.800" fill="#dcebfc"/>
  <circle cx="473" cy="265.500" r="11.800" fill="#3d97fb"/>
  <circle cx="564.500" cy="265.500" r="11.800" fill="#3d97fb"/>
  <!-- head -->
  <ellipse cx="518.800" cy="294.500" rx="54" ry="43" fill="url(#gb)"/>
  <rect x="475" y="274" width="87.500" height="51" rx="25" fill="#050d42"/>
  <circle cx="500.300" cy="296.500" r="9.500" fill="#1d2452" stroke="#fff" stroke-width="2"/>
  <circle cx="538.400" cy="296.500" r="9.500" fill="#1d2452" stroke="#fff" stroke-width="2"/>
  <circle cx="500.600" cy="293.600" r="3.900" fill="#fff"/><circle cx="504.500" cy="298.600" r="1.400" fill="#fff"/>
  <circle cx="538.700" cy="293.600" r="3.900" fill="#fff"/><circle cx="542.600" cy="298.600" r="1.400" fill="#fff"/>
  <path d="M511 313c4 4.500 11.500 4.500 15.500 0" fill="none" stroke="#fff" stroke-width="2.600" stroke-linecap="round"/>
</svg>

<!-- window frame -->
<i class="abs" style="left:0;top:0;width:1263px;height:1px;background:#5a5855"></i>
<i class="abs" style="left:0;top:1px;width:1263px;height:1px;background:#c9c9c9"></i>
<i class="abs" style="left:0;top:0;width:1px;height:579px;background:#6b6966"></i>
<i class="abs" style="left:1261px;top:2px;width:1px;height:576px;background:#d0d0d0"></i>
<i class="abs" style="left:1262px;top:0;width:1px;height:579px;background:#555352"></i>
<i class="abs" style="left:0;top:578px;width:1263px;height:1px;background:#5f5d5b"></i>

</div>
</body>
</html>
